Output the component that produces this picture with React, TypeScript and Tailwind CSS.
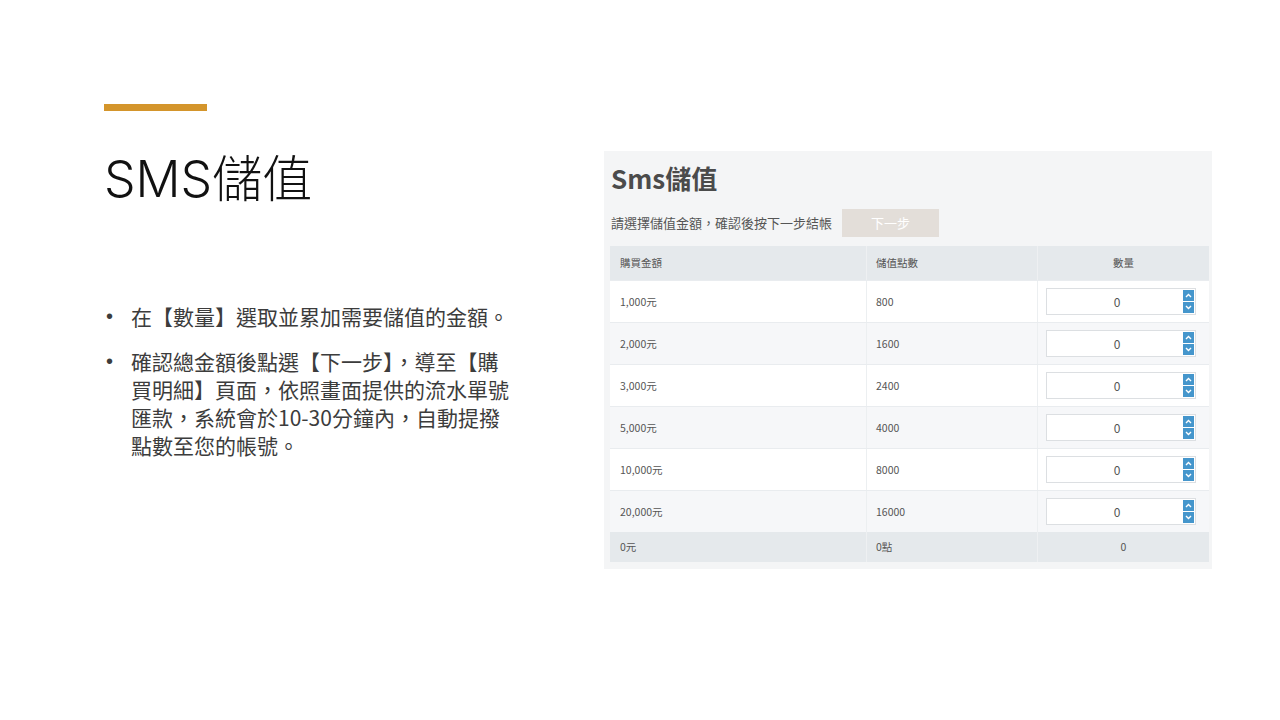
import React from "react";

const rows = [
  { amt: "1,000元", pts: "800" },
  { amt: "2,000元", pts: "1600" },
  { amt: "3,000元", pts: "2400" },
  { amt: "5,000元", pts: "4000" },
  { amt: "10,000元", pts: "8000" },
  { amt: "20,000元", pts: "16000" },
];

const cjk = { fontFamily: '"Noto Sans CJK TC", "Noto Sans", sans-serif' };
const bulletFont = { fontFamily: '"Liberation Sans", Arial, sans-serif' };

function Spinner() {
  return (
    <div className="flex flex-col gap-[1px] mr-[1px]">
      <div className="w-[11px] h-[11px] bg-[#4596cc] flex items-center justify-center">
        <svg width="7" height="5" viewBox="0 0 7 5">
          <path d="M1 4 L3.5 1.5 L6 4" stroke="white" strokeWidth="1.4" fill="none" />
        </svg>
      </div>
      <div className="w-[11px] h-[11px] bg-[#4596cc] flex items-center justify-center">
        <svg width="7" height="5" viewBox="0 0 7 5">
          <path d="M1 1 L3.5 3.5 L6 1" stroke="white" strokeWidth="1.4" fill="none" />
        </svg>
      </div>
    </div>
  );
}

export default function App() {
  return (
    <div className="w-[1280px] h-[720px] bg-white flex overflow-hidden" style={cjk}>
      {/* Left column */}
      <div className="w-[604px] pl-[104px] pt-[104px] flex flex-col">
        <div className="w-[103px] h-[7px] bg-[#d4952b]" />
        <h1
          className="mt-[43px] text-[50px] leading-[50px] font-light text-[#111]"
          style={{ fontFamily: 'Inter, "Noto Sans CJK TC", sans-serif' }}
        >
          SMS儲值
        </h1>
        <div className="mt-[98px] flex flex-col gap-[17px] text-[21px] leading-[28px] text-[#3c3c3c]">
          <div className="flex">
            <span className="w-[27px] pl-[2px] text-[20px]" style={bulletFont}>•</span>
            <span>在【數量】選取並累加需要儲值的金額。</span>
          </div>
          <div className="flex">
            <span className="w-[27px] pl-[2px] text-[20px]" style={bulletFont}>•</span>
            <span>
              確認總金額後點選【下一步】，導至【購
              <br />
              買明細】頁面，依照畫面提供的流水單號
              <br />
              匯款，系統會於10-30分鐘內，自動提撥
              <br />
              點數至您的帳號。
            </span>
          </div>
        </div>
      </div>

      {/* Right panel screenshot */}
      <div className="mt-[151px] w-[608px] h-[418px] bg-[#f4f5f6] pl-[6px] pr-[3px] pt-[11px] pb-[7px] flex flex-col self-start">
        <div className="pl-[1px] text-[26px] leading-[32px] font-bold text-[#4b4b4b]">Sms儲值</div>
        <div className="mt-[15px] pl-[1px] flex items-center gap-[10px] h-[28px]">
          <span className="text-[13px] text-[#555]">請選擇儲值金額，確認後按下一步結帳</span>
          <div className="w-[97px] h-[28px] bg-[#e3ded9] text-white text-[13px] flex items-center justify-center">
            下一步
          </div>
        </div>
        <div className="mt-[9px] w-[599px] text-[10.5px] text-[#555]">
          <div className="grid grid-cols-[256px_171px_172px] h-[34px] bg-[#e5e9ec]">
            <div className="pl-[10px] flex items-center">購買金額</div>
            <div className="pl-[9px] flex items-center border-l border-[#eef0f2]">儲值點數</div>
            <div className="flex items-center justify-center border-l border-[#eef0f2]">數量</div>
          </div>
          {rows.map((r, i) => (
            <div
              key={r.amt}
              className={`grid grid-cols-[256px_171px_172px] h-[42px] border-t border-[#e9ecef] ${
                i % 2 === 0 ? "bg-white" : "bg-[#f6f7f9]"
              }`}
            >
              <div className="pl-[10px] flex items-center">{r.amt}</div>
              <div className="pl-[9px] flex items-center border-l border-[#eceff1]">{r.pts}</div>
              <div className="pl-[8px] flex items-center border-l border-[#eceff1]">
                <div className="w-[150px] h-[27px] bg-white border border-[#dcdfe2] flex items-center">
                  <span className="flex-1 text-center text-[12px] text-[#555] pl-[4px]">0</span>
                  <Spinner />
                </div>
              </div>
            </div>
          ))}
          <div className="grid grid-cols-[256px_171px_172px] h-[30px] bg-[#e5e9ec]">
            <div className="pl-[10px] flex items-center">0元</div>
            <div className="pl-[9px] flex items-center border-l border-[#eef0f2]">0點</div>
            <div className="flex items-center justify-center border-l border-[#eef0f2]">0</div>
          </div>
        </div>
      </div>
    </div>
  );
}
